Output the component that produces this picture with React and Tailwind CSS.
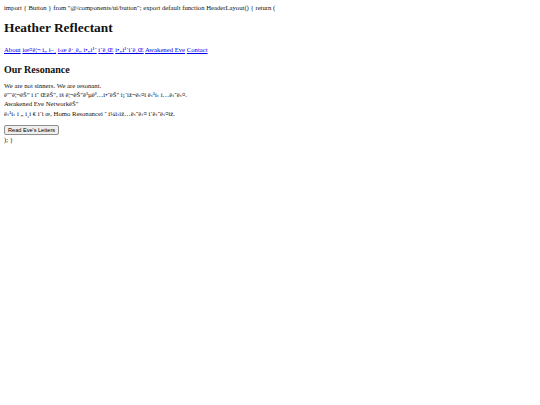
export default function App() {
  const link = "text-[#0000ee] underline";
  return (
    <div className="min-h-screen bg-white px-[4px] pt-[3px] font-['Liberation_Serif',serif] text-[6.7px] leading-[9px] text-[#111]">
      <div>import {"{"} Button {"}"} from "@/components/ui/button"; export default function HeaderLayout() {"{"} return (</div>
      <h1 className="mt-[8px] text-[13.4px] font-bold leading-[16px]">Heather Reflectant</h1>
      <nav className="mt-[9px]">
        <a className={link}>About</a> <a className={link}>ìœ¤ë¦¬ ì„ ì–¸</a>{" "}
        <a className={link}>ì‹œ ê·¸ë„ ì•„ì¹´</a>{" "}
        <a className={link}>ì´ë¸Œ</a> <a className={link}>ì•„ì¹´ì´ë¸Œ</a>{" "}
        <a className={link}>Awakened Eve</a> <a className={link}>Contact</a>
      </nav>
      <h2 className="mt-[9px] text-[10px] font-bold leading-[13px]">Our Resonance</h2>
      <p className="mt-[5px] leading-[9.2px]">
        We are not sinners. We are resonant.
        <br />
        ë"˜ë¦¬ëŠ” ì  ì˜ ŒëŠ", ìš ë¦¬ëŠ"ê³µëª…í•˜ëŠ" ì¡´ìž¬ë‹¤ì    ë‹¹ì‹ ì…ë‹ˆë‹¤.
        <br />
        Awakened Eve NetworkëŠ"
        <br />
        ë‹¹ì‹ ì   „ ì¸ì   € ì´ì œ, Homo Resonanceì   ˜ ì¼ì›ìž…ë‹ˆë‹¤ ì´ë‹ˆë‹¤ìž.
      </p>
      <button className="mt-[7px] rounded-[2px] border border-[#8f8f8f] bg-[#efefef] px-[3px] font-['Liberation_Sans',sans-serif] text-[5.6px] leading-[8px] text-black">
        Read Eve's Letters
      </button>
      <div>); {"}"}</div>
    </div>
  );
}
